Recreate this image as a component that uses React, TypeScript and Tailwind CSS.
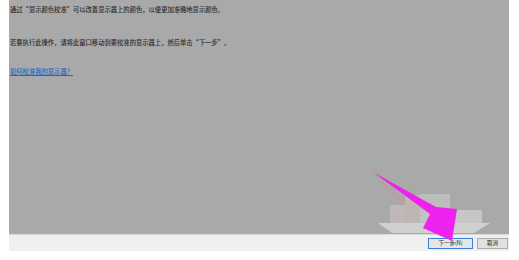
import React from "react";

const cjk = { fontFamily: '"Noto Sans CJK SC", "Noto Sans", sans-serif' };

export default function App() {
  return (
    <div className="relative w-[519px] h-[260px] bg-white overflow-hidden" style={cjk}>
      <div className="ml-[9px] w-[500px] h-[251px] flex flex-col">
        <div className="h-[234px] bg-[#a9a9a9] pl-[1px] pt-[6px] text-[6.3px] leading-[8px] font-medium text-[#2e2e2e]">
          <p className="whitespace-nowrap">通过“显示颜色校准”可以改善显示器上的颜色，以便更加准确地显示颜色。</p>
          <p className="mt-[25px] whitespace-nowrap">若要执行此操作，请将此窗口移动到要校准的显示器上，然后单击“下一步”。</p>
          <p className="mt-[21px] whitespace-nowrap text-[#1e66c8] underline">如何校准我的显示器？</p>
        </div>
        <div className="h-[17px] bg-[#efefef] border-t border-[#d8d8d8] flex items-center justify-end gap-[4px] pr-[1px]">
          <div className="w-[45px] h-[11px] border border-[#3b80d6] bg-[#e6e6e6] flex items-center justify-center text-[5.5px] text-[#222]">下一步(N)</div>
          <div className="w-[31px] h-[11px] border border-[#adadad] bg-[#e1e1e1] flex items-center justify-center text-[5.5px] text-[#222]">取消</div>
        </div>
      </div>
      <svg className="absolute left-0 top-0 pointer-events-none" width="519" height="260" viewBox="0 0 519 260">
        <rect x="390" y="205" width="15" height="18" fill="#c0b8b8" />
        <rect x="405" y="195" width="15" height="28" fill="#bfb5b5" />
        <rect x="420" y="194" width="30" height="16" fill="#bdbdbd" />
        <rect x="420" y="210" width="30" height="13" fill="#c3c3c3" />
        <rect x="450" y="210" width="32" height="13" fill="#c6c6c6" />
        <polygon points="378,223 490,223 474,233 392,233" fill="#d0d0d0" />
        <line x1="382" y1="182" x2="403" y2="203" stroke="#dc8a8a" strokeWidth="1" opacity="0.8" />
        <polygon points="373,172 436,207 457,209 452,241 423,228 430,214" fill="#ee22ee" />
      </svg>
    </div>
  );
}
